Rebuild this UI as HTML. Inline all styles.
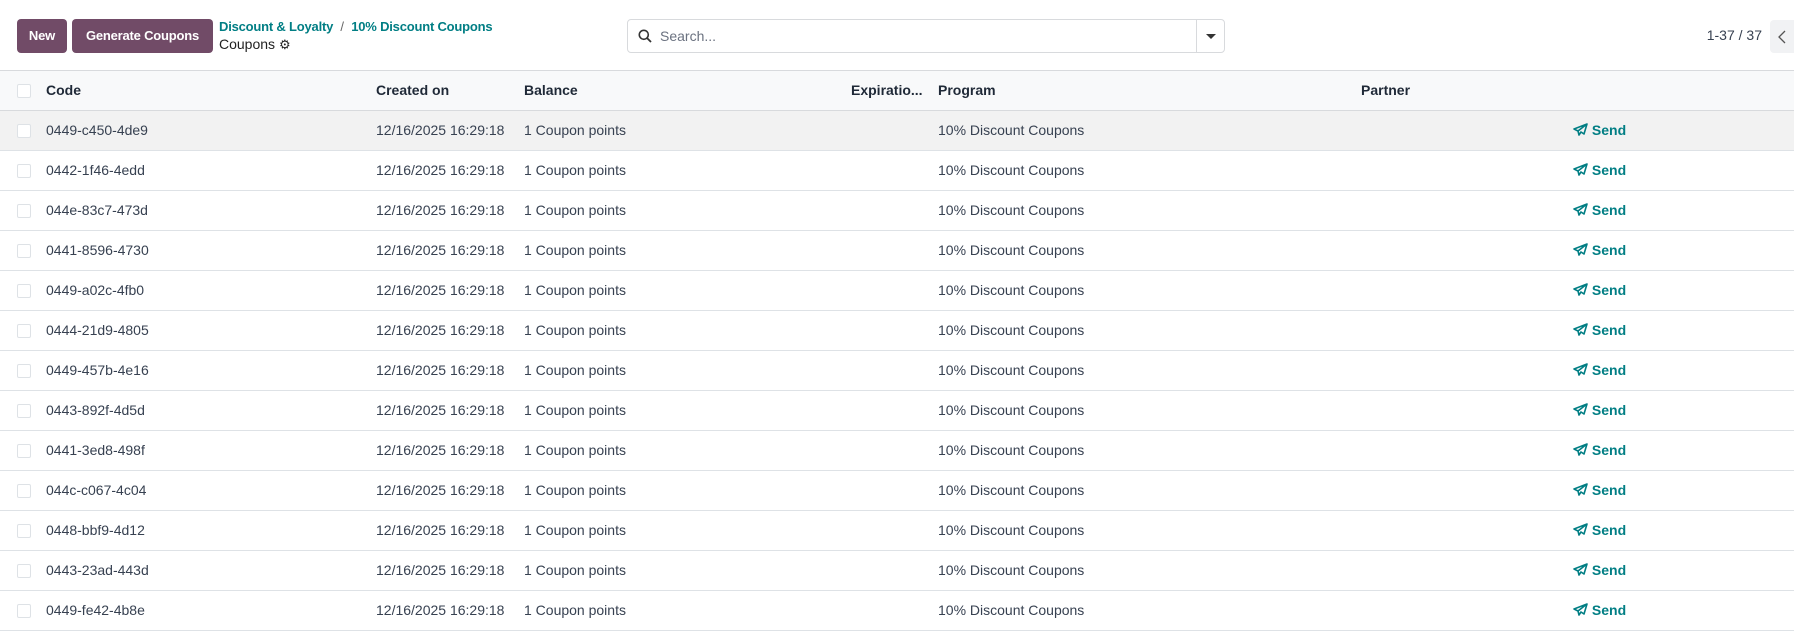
<!DOCTYPE html>
<html><head><meta charset="utf-8"><style>
*{box-sizing:border-box;margin:0;padding:0}
body{width:1794px;height:630px;overflow:hidden;background:#fff;font-family:"Liberation Sans",sans-serif;font-size:14px;color:#374151;position:relative}
.btn{position:absolute;top:19px;height:34px;background:#714B67;color:#fff;border-radius:4px;font-weight:bold;font-size:13px;line-height:34px;text-align:center;white-space:nowrap;letter-spacing:-0.2px}
.bc{position:absolute;left:219px;font-size:13px;white-space:nowrap}
.a{color:#017e84;font-weight:bold;letter-spacing:-0.2px}
.search{position:absolute;left:627px;top:19px;width:598px;height:34px;border:1px solid #d8dadd;border-radius:4px}
.search .sep{position:absolute;left:568px;top:0;bottom:0;border-left:1px solid #d8dadd}
.row{position:absolute;left:0;width:1794px;height:40px;border-bottom:1px solid #dee2e6}
.row span{position:absolute;top:11px;white-space:nowrap}
.cb{position:absolute;left:17px;top:13px;width:14px;height:14px;border:1px solid #dee2e6;border-radius:2px;background:#fff}
.hd{background:#f8f9fa;border-top:1px solid #d8dadd;border-bottom:1px solid #d8dadd}
.hd span{font-weight:bold;color:#1f2937}
.send{color:#017e84;font-weight:bold}
</style></head><body>
<div class="btn" style="left:17px;width:50px">New</div>
<div class="btn" style="left:72px;width:141px">Generate Coupons</div>
<div class="bc" style="top:19px"><span class="a">Discount &amp; Loyalty</span> <span style="color:#666">&nbsp;/&nbsp;</span> <span class="a">10% Discount Coupons</span></div>
<div class="bc" style="top:36px;font-size:14px;color:#222">Coupons <span style="font-size:13px">⚙</span></div>
<div class="search">
<svg style="position:absolute;left:10px;top:9px" width="14" height="14" viewBox="0 0 14 14"><circle cx="5.8" cy="5.8" r="4.5" fill="none" stroke="#333" stroke-width="1.6"/><path d="M9 9l4 4" stroke="#333" stroke-width="1.8"/></svg>
<span style="position:absolute;left:32px;top:8px;color:#6b7280">Search...</span>
<div class="sep"></div>
<svg style="position:absolute;left:578px;top:14px" width="10" height="6"><path d="M0 0h10L5 5z" fill="#333"/></svg>
</div>
<div style="position:absolute;right:32px;top:27px;color:#374151">1-37 / 37</div>
<div style="position:absolute;left:1770px;top:20px;width:30px;height:33px;background:#f1f2f4;border-radius:4px"><svg style="position:absolute;left:8px;top:10px" width="8" height="14"><path d="M7 1L1 7l6 6" fill="none" stroke="#555" stroke-width="1.3"/></svg></div>
<div class="row hd" style="top:70px;height:41px"><div class="cb"></div><span style="left:46px">Code</span><span style="left:376px">Created on</span><span style="left:524px">Balance</span><span style="left:851px">Expiratio...</span><span style="left:938px">Program</span><span style="left:1361px">Partner</span></div>
<div id="rows"></div>
<script>
var codes=["0449-c450-4de9","0442-1f46-4edd","044e-83c7-473d","0441-8596-4730","0449-a02c-4fb0","0444-21d9-4805","0449-457b-4e16","0443-892f-4d5d","0441-3ed8-498f","044c-c067-4c04","0448-bbf9-4d12","0443-23ad-443d","0449-fe42-4b8e"];
var h="";codes.forEach(function(c,i){h+='<div class="row" style="top:'+(111+i*40)+'px'+(i==0?';background:#f2f2f2':'')+'"><div class="cb"></div><span style="left:46px">'+c+'</span><span style="left:376px">12/16/2025 16:29:18</span><span style="left:524px">1 Coupon points</span><span style="left:938px">10% Discount Coupons</span><span class="send" style="left:1573px"><svg width="15" height="13" viewBox="0 0 15 13" style="vertical-align:-1px"><path d="M14 1L1 6l4 2 1 4 2-3 3 2z M5 8l9-7" fill="none" stroke="#017e84" stroke-width="1.6" stroke-linejoin="round"/></svg> Send</span></div>'});
document.getElementById("rows").innerHTML=h;
</script>
</body></html>
